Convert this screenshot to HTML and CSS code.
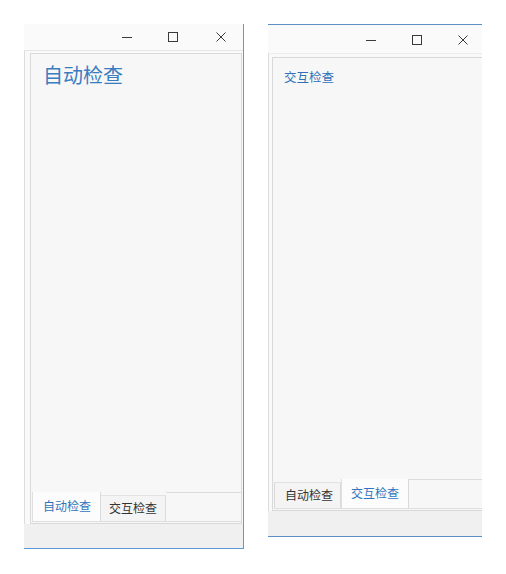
FILE: index.html
```html
<!DOCTYPE html>
<html lang="zh-CN">
<head>
<meta charset="utf-8">
<title>检查窗口</title>
<link rel="stylesheet" href="styles.css">
</head>
<body>
<div class="desk">
  <div class="win win-left">
    <div class="titlebar">
      <svg class="ctl" viewBox="0 0 10 10"><path d="M0 5.5H10" /></svg>
      <svg class="ctl" viewBox="0 0 10 10"><rect x="0.5" y="0.5" width="9" height="9" /></svg>
      <svg class="ctl ctl-close" viewBox="0 0 10 10"><path d="M0.5 0.5L9.5 9.5M9.5 0.5L0.5 9.5" /></svg>
    </div>
    <div class="body">
      <div class="panel">
        <div class="page">
          <div class="heading heading-big">自动检查</div>
        </div>
        <div class="tabstrip">
          <div class="tab tab-on">自动检查</div>
          <div class="tab">交互检查</div>
          <div class="tab-fill"></div>
        </div>
      </div>
    </div>
    <div class="status"></div>
  </div>

  <div class="win win-right">
    <div class="titlebar">
      <svg class="ctl" viewBox="0 0 10 10"><path d="M0 5.5H10" /></svg>
      <svg class="ctl" viewBox="0 0 10 10"><rect x="0.5" y="0.5" width="9" height="9" /></svg>
      <svg class="ctl" viewBox="0 0 10 10"><path d="M0.5 0.5L9.5 9.5M9.5 0.5L0.5 9.5" /></svg>
    </div>
    <div class="body">
      <div class="panel">
        <div class="page">
          <div class="heading heading-small">交互检查</div>
        </div>
        <div class="tabstrip">
          <div class="tab tab-first">自动检查</div>
          <div class="tab tab-on">交互检查</div>
          <div class="tab-fill"></div>
        </div>
      </div>
    </div>
    <div class="status"></div>
  </div>
</div>
</body>
</html>
```

FILE: styles.css
```css
html, body {
  margin: 0;
  padding: 0;
  background: #ffffff;
}

body {
  width: 506px;
  height: 574px;
  overflow: hidden;
  font-family: "Noto Sans CJK SC", "Noto Sans", "Liberation Sans", sans-serif;
}

.desk {
  display: flex;
  align-items: flex-start;
  gap: 24px;
  padding: 24px 0 0 24px;
}

.win {
  display: flex;
  flex-direction: column;
  background: #f9f9f9;
  overflow: hidden;
  box-sizing: border-box;
}

.win-left {
  width: 220px;
  height: 525px;
  border-right: 1px solid #5b9bd5;
  border-bottom: 1px solid #5b9bd5;
}

.win-right {
  width: 214px;
  height: 513px;
  border-top: 1px solid #5b8fc6;
  border-bottom: 1px solid #5b8fc6;
}

.titlebar {
  display: flex;
  align-items: center;
  gap: 36px;
  padding-left: 98px;
  background: #fafafa;
  flex: none;
}

.win-left .titlebar {
  height: 26px;
}

.win-right .titlebar {
  height: 28px;
  padding-top: 2px;
  box-sizing: border-box;
}

.ctl {
  width: 10px;
  height: 10px;
  flex: none;
  fill: none;
  stroke: #3a3a3a;
  stroke-width: 1;
  overflow: visible;
}

.ctl-close {
  margin-left: 2px;
}

.body {
  flex: 1;
  display: flex;
  border-left: 1px solid #dcdcdc;
  min-height: 0;
}

.win-left .body {
  border-top: 1px solid #e6e6e6;
  padding: 2px 1px 0 5px;
}

.win-right .body {
  border-top: 1px solid #ececec;
  padding: 3px 0 0 3px;
  margin-right: -2px;
}

.panel {
  flex: 1;
  display: flex;
  flex-direction: column;
  border: 1px solid #d9d9d9;
  background: #f7f7f7;
}

.page {
  flex: 1;
}

.heading {
  color: #3a7cc0;
  white-space: nowrap;
}

.heading-big {
  font-size: 20px;
  line-height: 28px;
  padding: 7px 0 0 12px;
}

.heading-small {
  font-size: 12.5px;
  line-height: 18px;
  padding: 10px 0 0 11px;
  color: #2f72b8;
}

.tabstrip {
  display: flex;
  align-items: flex-start;
  height: 29px;
  margin: 0 0 1px 1px;
  border-bottom: 1px solid #dedede;
  flex: none;
}

.tab {
  height: 26px;
  margin-top: 3px;
  padding: 0 8px;
  box-sizing: border-box;
  font-size: 12px;
  line-height: 24px;
  color: #333333;
  background: #f4f4f4;
  border-right: 1px solid #dadada;
  border-top: 1px solid #e2e2e2;
  white-space: nowrap;
  flex: none;
}

.tab-on {
  height: 29px;
  margin-top: 0;
  padding: 2px 9px 0 10px;
  background: #fcfcfc;
  color: #2f74bd;
  border-top: none;
  border-left: 1px solid #e0e0e0;
}

.tab-first {
  padding-left: 10px;
  padding-right: 7px;
  border-left: 1px solid #dadada;
}

.win-right .tab-on {
  padding-left: 9px;
}

.tab-fill {
  flex: 1;
  align-self: stretch;
  border-top: 1px solid #dcdcdc;
}

.status {
  flex: none;
  background: #f0f0f0;
}

.win-left .status {
  height: 24px;
}

.win-right .status {
  height: 25px;
}
```
